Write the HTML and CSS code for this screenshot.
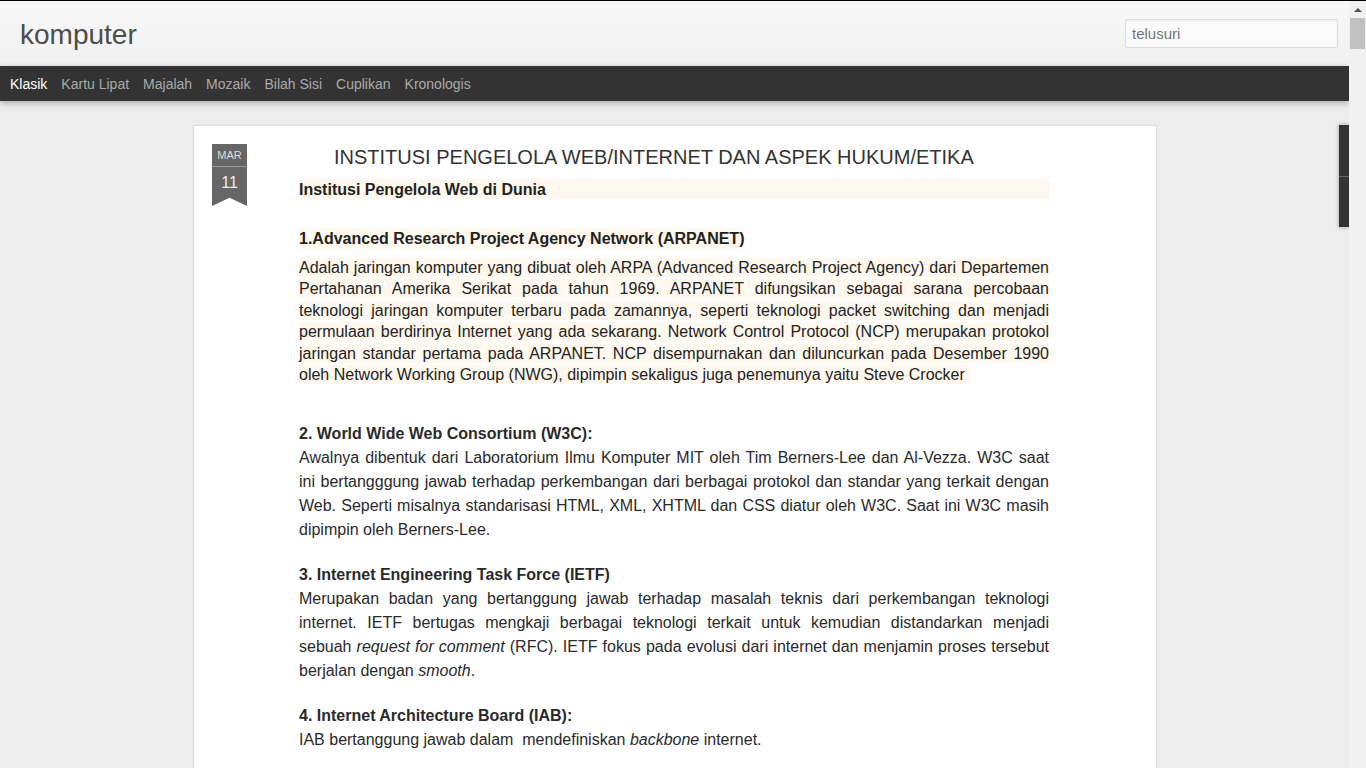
FILE: index.html
```html
<!DOCTYPE html>
<html lang="id">
<head>
<meta charset="utf-8">
<title>komputer</title>
<link rel="stylesheet" href="styles.css">
</head>
<body>
<div class="window">
  <div class="page">
    <header class="top">
      <div class="blog-title">komputer</div>
      <input class="search" type="text" placeholder="telusuri">
    </header>
    <nav class="views">
      <span class="view active">Klasik</span>
      <span class="view">Kartu Lipat</span>
      <span class="view">Majalah</span>
      <span class="view">Mozaik</span>
      <span class="view">Bilah Sisi</span>
      <span class="view">Cuplikan</span>
      <span class="view">Kronologis</span>
    </nav>
    <main class="stage">
      <article class="card">
        <div class="date">
          <div class="mon">MAR</div>
          <div class="day">11</div>
        </div>
        <div class="post">
          <h1 class="post-title">INSTITUSI PENGELOLA WEB/INTERNET DAN ASPEK HUKUM/ETIKA</h1>
          <div class="lead">Institusi Pengelola Web di Dunia</div>
          <div class="sub"><span class="mark">1.Advanced Research Project Agency Network (ARPANET)</span></div>
          <p class="para"><span class="hl">Adalah jaringan komputer yang dibuat oleh ARPA (Advanced Research Project Agency) dari Departemen Pertahanan Amerika Serikat pada tahun 1969. ARPANET difungsikan sebagai sarana percobaan teknologi jaringan komputer terbaru pada zamannya, seperti teknologi packet switching dan menjadi permulaan berdirinya Internet yang ada sekarang. Network Control Protocol (NCP) merupakan protokol jaringan standar pertama pada ARPANET. NCP disempurnakan dan diluncurkan pada Desember 1990 oleh Network Working Group (NWG), dipimpin sekaligus juga penemunya yaitu Steve Crocker&nbsp;</span></p>
          <div class="section first">
            <b>2. World Wide Web Consortium (W3C):</b>
            <span class="ln">Awalnya dibentuk dari Laboratorium Ilmu Komputer MIT oleh Tim Berners-Lee dan Al-Vezza. W3C saat</span>
            <span class="ln">ini bertangggung jawab terhadap perkembangan dari berbagai protokol dan standar yang terkait dengan</span>
            <span class="ln">Web. Seperti misalnya standarisasi HTML, XML, XHTML dan CSS diatur oleh W3C. Saat ini W3C masih</span>
            <span class="ln last">dipimpin oleh Berners-Lee.</span>
          </div>
          <div class="section">
            <b>3. Internet Engineering Task Force (IETF)</b>
            <span class="ln">Merupakan badan yang bertanggung jawab terhadap masalah teknis dari perkembangan teknologi</span>
            <span class="ln">internet. IETF bertugas mengkaji berbagai teknologi terkait untuk kemudian distandarkan menjadi</span>
            <span class="ln">sebuah <i>request for comment</i> (RFC). IETF fokus pada evolusi dari internet dan menjamin proses tersebut</span>
            <span class="ln last">berjalan dengan <i>smooth</i>.</span>
          </div>
          <div class="section">
            <b>4. Internet Architecture Board (IAB):</b>
            <span class="ln last">IAB bertanggung jawab dalam &nbsp;mendefiniskan <i>backbone</i> internet.</span>
          </div>
        </div>
      </article>
    </main>
    <div class="side-tab"></div>
  </div>
  <div class="scrollbar">
    <span class="arrow"></span>
    <span class="thumb"></span>
  </div>
</div>
</body>
</html>
```
FILE: styles.css
```css
html, body {
  margin: 0;
  padding: 0;
  height: 100%;
  overflow: hidden;
}
body {
  font-family: "Liberation Sans", Arial, sans-serif;
  border-top: 1px solid #000;
  box-sizing: border-box;
  background: #eee;
}
.window {
  display: flex;
  height: 767px;
}
.page {
  width: 1349px;
  flex: none;
  position: relative;
  background: #ededed;
  overflow: hidden;
}
.top {
  height: 65px;
  box-sizing: border-box;
  background: linear-gradient(#f8f8f8, #f1f1f1);
  display: flex;
  justify-content: space-between;
  align-items: flex-start;
  padding: 18px 11px 0 20px;
}
.blog-title {
  font-size: 28px;
  line-height: 32px;
  color: #4d4d4d;
}
.search {
  width: 213px;
  height: 29px;
  box-sizing: border-box;
  border: 1px solid #dcdcdc;
  border-radius: 2px;
  background: #fbfbfb;
  box-shadow: inset 0 1px 2px rgba(0,0,0,0.06);
  padding: 0 6px;
  font-family: "Liberation Sans", Arial, sans-serif;
  font-size: 15px;
  color: #333;
  outline: none;
}
.search::placeholder {
  color: #757575;
}
.views {
  height: 35px;
  background: #333;
  display: flex;
  align-items: center;
  gap: 14px;
  padding-left: 10px;
  font-size: 14px;
  color: #aaa;
  box-shadow: 0 2px 6px rgba(0,0,0,0.28);
  position: relative;
  z-index: 2;
}
.view.active {
  color: #fff;
}
.stage {
  padding-top: 24px;
}
.card {
  margin-left: 193px;
  width: 964px;
  min-height: 700px;
  box-sizing: border-box;
  background: #fff;
  border: 1px solid #dedede;
  border-radius: 2px;
  box-shadow: 0 0 2px rgba(0,0,0,0.06);
  display: flex;
  align-items: flex-start;
  padding: 18px 0 0 18px;
}
.date {
  width: 35px;
  flex: none;
  margin-right: 52px;
  color: #eee;
  text-align: center;
}
.mon {
  height: 22px;
  line-height: 22px;
  font-size: 11px;
  background: #666;
  color: #ddd;
  border-bottom: 1px solid #9a9a9a;
}
.day {
  height: 39px;
  line-height: 32px;
  font-size: 16px;
  background: #666;
  clip-path: polygon(0 0, 100% 0, 100% 100%, 50% 79%, 0 100%);
}
.post {
  width: 750px;
  color: #222;
  font-size: 16px;
}
.post-title {
  margin: 1px 0 10px;
  padding-left: 35px;
  font-size: 20px;
  line-height: 24px;
  font-weight: normal;
  color: #333;
}
.lead {
  height: 20px;
  line-height: 22px;
  background: #fff8ee;
  font-weight: bold;
}
.sub {
  margin-top: 29px;
  line-height: 21px;
  font-weight: bold;
}
.mark {
  display: inline-block;
  background: #fff8ee;
}
.para {
  margin: 8px 0 0;
  line-height: 21.4px;
  text-align: justify;
}
.hl {
  background: #fff8ee;
  padding: 1px 0;
}
.section {
  margin-top: 21px;
  line-height: 24px;
  color: #2a2a2a;
}
.section b {
  display: block;
}
.ln {
  display: block;
  text-align: justify;
  text-align-last: justify;
  white-space: nowrap;
}
.ln.last {
  text-align: left;
  text-align-last: left;
}
.section.first {
  margin-top: 37px;
}
.side-tab {
  position: absolute;
  right: 0;
  top: 124px;
  width: 10px;
  height: 102px;
  background: #333;
  box-shadow: 0 0 4px rgba(0,0,0,0.35);
}
.side-tab::after {
  content: "";
  position: absolute;
  left: 0;
  right: 0;
  top: 51px;
  height: 1px;
  background: #666;
}
.scrollbar {
  width: 17px;
  flex: none;
  background: #f1f1f1;
  display: flex;
  flex-direction: column;
  align-items: center;
}
.arrow {
  margin-top: 7px;
  width: 0;
  height: 0;
  border-left: 4px solid transparent;
  border-right: 4px solid transparent;
  border-bottom: 4px solid #505050;
}
.thumb {
  margin-top: 6px;
  width: 15px;
  height: 31px;
  background: #c1c1c1;
}
```
